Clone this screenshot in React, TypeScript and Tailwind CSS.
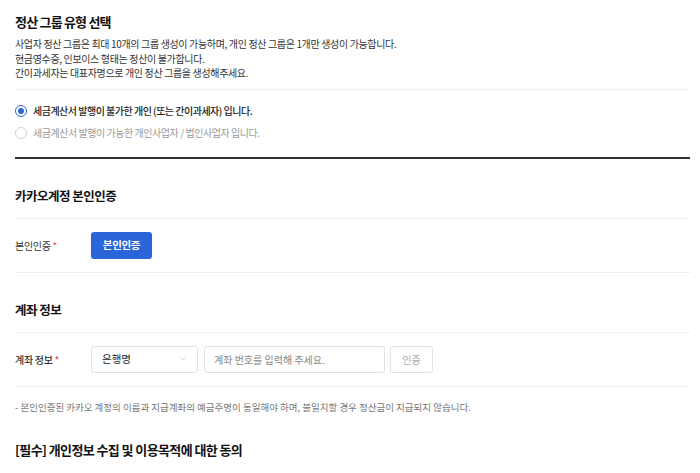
import { ChevronDown } from "lucide-react";

const font = { fontFamily: '"Noto Sans CJK KR", "Noto Sans", sans-serif' };

const Radio = ({ checked, label }: { checked: boolean; label: string }) => (
  <label className="flex h-[22px] items-center">
    <span
      className={
        checked
          ? "flex h-[12px] w-[12px] items-center justify-center rounded-full border border-[#2a66d9] bg-white"
          : "flex h-[12px] w-[12px] items-center justify-center rounded-full border border-[#d4d4d4] bg-white"
      }
    >
      {checked && <span className="h-[6px] w-[6px] rounded-full bg-[#2a66d9]" />}
    </span>
    <span
      className={
        checked
          ? "ml-[6px] text-[10px] font-medium tracking-[-0.5px] text-[#222]"
          : "ml-[6px] text-[10px] tracking-[-0.45px] text-[#999]"
      }
    >
      {label}
    </span>
  </label>
);

const App = () => {
  return (
    <div className="min-h-[473px] bg-white pl-[15px] pr-[10px] pt-[12px]" style={font}>
      <h2 className="text-[13px] font-bold leading-[20px] tracking-[-0.8px] text-[#111]">정산 그룹 유형 선택</h2>
      <div className="mt-[5px] text-[10px] leading-[14.5px] tracking-[-0.35px] text-[#333]">
        <p>사업자 정산 그룹은 최대 10개의 그룹 생성이 가능하며, 개인 정산 그룹은 1개만 생성이 가능합니다.</p>
        <p>현금영수증, 인보이스 형태는 정산이 불가합니다.</p>
        <p>간이과세자는 대표자명으로 개인 정산 그룹을 생성해주세요.</p>
      </div>
      <div className="mt-[8px] border-t border-[#eeeeee]" />
      <div className="pt-[10px]">
        <Radio checked label="세금계산서 발행이 불가한 개인 (또는 간이과세자) 입니다." />
        <Radio checked={false} label="세금계산서 발행이 가능한 개인사업자 / 법인사업자 입니다." />
      </div>
      <div className="mt-[13px] border-t-2 border-[#333]" />

      <h3 className="mt-[27px] text-[12.5px] font-bold leading-[20px] tracking-[-0.5px] text-[#111]">카카오계정 본인인증</h3>
      <div className="mt-[12px] flex items-center border-y border-[#eeeeee] py-[13px]">
        <div className="w-[76px] text-[10px] tracking-[-0.3px] text-[#333]">
          본인인증 <span className="text-[#e5484d]">*</span>
        </div>
        <button className="h-[27px] w-[61px] rounded-[3px] bg-[#2a66d9] text-[10.5px] font-bold tracking-[-0.3px] text-white">
          본인인증
        </button>
      </div>

      <h3 className="mt-[27px] text-[12.5px] font-bold leading-[20px] tracking-[-0.5px] text-[#111]">계좌 정보</h3>
      <div className="mt-[12px] flex items-center border-y border-[#eeeeee] py-[13px]">
        <div className="w-[76px] text-[10px] font-medium tracking-[-0.3px] text-[#333]">
          계좌 정보 <span className="text-[#e5484d]">*</span>
        </div>
        <div className="flex h-[27px] w-[107px] items-center justify-between rounded-[3px] border border-[#e2e2e2] pl-[10px] pr-[9px]">
          <span className="text-[10.5px] text-[#222]">은행명</span>
          <ChevronDown className="h-[10px] w-[10px] text-[#b5b5b5]" strokeWidth={1.5} />
        </div>
        <div className="ml-[6px] flex h-[27px] w-[181px] items-center rounded-[3px] border border-[#e2e2e2] px-[9px]">
          <span className="text-[10px] text-[#888]">계좌 번호를 입력해 주세요.</span>
        </div>
        <button className="ml-[5px] h-[27px] w-[43px] rounded-[3px] border border-[#e2e2e2] text-[10px] text-[#aaa]">
          인증
        </button>
      </div>

      <p className="mt-[13px] text-[9.5px] leading-[14px] text-[#777]">
        - 본인인증된 카카오 계정의 이름과 지급계좌의 예금주명이 동일해야 하며, 불일치할 경우 정산금이 지급되지 않습니다.
      </p>

      <h3 className="mt-[26px] text-[13px] font-bold leading-[20px] tracking-[-0.6px] text-[#111]">
        [필수] 개인정보 수집 및 이용목적에 대한 동의
      </h3>
    </div>
  );
};

export default App;
